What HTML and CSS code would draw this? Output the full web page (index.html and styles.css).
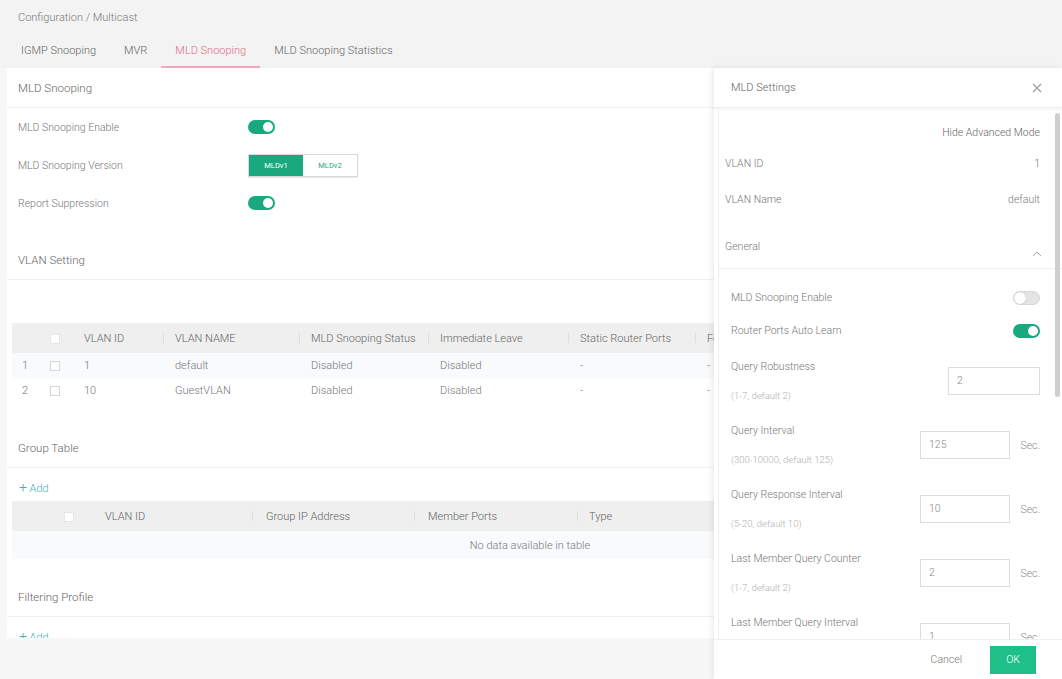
FILE: index.html
```html
<!DOCTYPE html>
<html lang="en">
<head>
    <meta charset="UTF-8">
    <title>Configuration / Multicast - MLD Snooping</title>
    <link rel="stylesheet" href="styles.css">
</head>
<body>
    <div class="top">
        <div class="crumb">Configuration / Multicast</div>
        <div class="tabs">
            <span class="tab">IGMP Snooping</span>
            <span class="tab">MVR</span>
            <span class="tab active">MLD Snooping</span>
            <span class="tab">MLD Snooping Statistics</span>
        </div>
    </div>

    <div class="main">
        <div class="card">
            <div class="sec-title">MLD Snooping</div>
            <div class="form">
                <div class="frow">
                    <span class="flabel">MLD Snooping Enable</span>
                    <span class="switch on"></span>
                </div>
                <div class="frow">
                    <span class="flabel">MLD Snooping Version</span>
                    <span class="seg">
                        <span class="seg-btn sel">MLDv1</span><span class="seg-btn">MLDv2</span>
                    </span>
                </div>
                <div class="frow">
                    <span class="flabel">Report Suppression</span>
                    <span class="switch on"></span>
                </div>
            </div>

            <div class="sec-title gap">VLAN Setting</div>
            <div class="tbl-area vlan-area">
                <table class="grid vlan">
                    <thead>
                        <tr>
                            <th class="c-idx"></th>
                            <th class="c-chk"><span class="chk fill"></span></th>
                            <th class="c-id">VLAN ID</th>
                            <th class="c-name sep">VLAN NAME</th>
                            <th class="c-st sep">MLD Snooping Status</th>
                            <th class="c-il sep">Immediate Leave</th>
                            <th class="c-srp sep">Static Router Ports</th>
                            <th class="sep">Forbidden Router Ports</th>
                        </tr>
                    </thead>
                    <tbody>
                        <tr class="hl">
                            <td class="c-idx">1</td>
                            <td class="c-chk"><span class="chk"></span></td>
                            <td>1</td>
                            <td>default</td>
                            <td>Disabled</td>
                            <td>Disabled</td>
                            <td>-</td>
                            <td>-</td>
                        </tr>
                        <tr>
                            <td class="c-idx">2</td>
                            <td class="c-chk"><span class="chk"></span></td>
                            <td>10</td>
                            <td>GuestVLAN</td>
                            <td>Disabled</td>
                            <td>Disabled</td>
                            <td>-</td>
                            <td>-</td>
                        </tr>
                    </tbody>
                </table>
            </div>

            <div class="sec-title">Group Table</div>
            <div class="tbl-area group-area">
                <div class="add"><span class="plus">+</span> Add</div>
                <table class="grid group">
                    <thead>
                        <tr>
                            <th class="g-chk"><span class="chk fill"></span></th>
                            <th class="g-id">VLAN ID</th>
                            <th class="g-ip sep">Group IP Address</th>
                            <th class="g-mp sep">Member Ports</th>
                            <th class="sep">Type</th>
                        </tr>
                    </thead>
                    <tbody>
                        <tr class="hl">
                            <td colspan="5" class="empty">No data available in table</td>
                        </tr>
                    </tbody>
                </table>
            </div>

            <div class="sec-title">Filtering Profile</div>
            <div class="tbl-area">
                <div class="add"><span class="plus">+</span> Add</div>
            </div>
        </div>

        <div class="drawer">
            <div class="d-head">
                <span>MLD Settings</span>
                <svg class="close" width="10" height="10" viewBox="0 0 10 10"><path d="M1 1L9 9M9 1L1 9" stroke="#999" stroke-width="1.1"/></svg>
            </div>
            <div class="d-body">
                <div class="d-scroll">
                    <div class="adv">Hide Advanced Mode</div>
                    <div class="kv info first"><span>VLAN ID</span><span>1</span></div>
                    <div class="kv info"><span>VLAN Name</span><span>default</span></div>
                    <div class="group-head">
                        <span>General</span>
                        <svg width="10" height="6" viewBox="0 0 10 6"><path d="M1 5L5 1L9 5" fill="none" stroke="#aaa" stroke-width="1"/></svg>
                    </div>
                    <div class="kv sw-row"><span>MLD Snooping Enable</span><span class="switch off"></span></div>
                    <div class="kv sw-row"><span>Router Ports Auto Learn</span><span class="switch on"></span></div>

                    <div class="field">
                        <div class="f-text">
                            <div>Query Robustness</div>
                            <div class="hint">(1-7, default 2)</div>
                        </div>
                        <div class="inp wide">2</div>
                    </div>
                    <div class="field">
                        <div class="f-text">
                            <div>Query Interval</div>
                            <div class="hint">(300-10000, default 125)</div>
                        </div>
                        <div class="inp">125</div>
                        <span class="unit">Sec.</span>
                    </div>
                    <div class="field">
                        <div class="f-text">
                            <div>Query Response Interval</div>
                            <div class="hint">(5-20, default 10)</div>
                        </div>
                        <div class="inp">10</div>
                        <span class="unit">Sec.</span>
                    </div>
                    <div class="field">
                        <div class="f-text">
                            <div>Last Member Query Counter</div>
                            <div class="hint">(1-7, default 2)</div>
                        </div>
                        <div class="inp">2</div>
                        <span class="unit">Sec.</span>
                    </div>
                    <div class="field">
                        <div class="f-text">
                            <div>Last Member Query Interval</div>
                            <div class="hint">(1-25, default 1)</div>
                        </div>
                        <div class="inp">1</div>
                        <span class="unit">Sec.</span>
                    </div>
                </div>
                <div class="scrollbar"></div>
            </div>
            <div class="d-foot">
                <span class="cancel">Cancel</span>
                <span class="ok">OK</span>
            </div>
        </div>
    </div>
</body>
</html>
```

FILE: styles.css
```css
body {
    margin: 0;
    background: #f7f7f7;
    font-family: Roboto, "Liberation Sans", Arial, sans-serif;
    font-weight: 300;
    font-size: 11px;
    color: #6f6f6f;
    overflow: hidden;
}

/* header with breadcrumb and tabs */
.top {
    height: 68px;
    background: #f3f3f3;
}
.crumb {
    padding: 11px 0 0 18px;
    line-height: 14px;
    color: #777;
}
.tabs {
    margin-top: 11px;
    padding-left: 7px;
    display: flex;
}
.tab {
    padding: 0 14px;
    line-height: 30px;
    border-bottom: 2px solid transparent;
    color: #666;
}
.tab.active {
    color: #e06a86;
    border-bottom-color: #eba9b9;
}

.main {
    position: relative;
    height: 611px;
}

/* left card, clipped where the drawer covers it */
.card {
    margin-left: 7px;
    width: 707px;
    height: 570px;
    overflow: hidden;
    background: #fff;
}
.sec-title {
    height: 39px;
    line-height: 40px;
    padding-left: 11px;
    font-size: 11.5px;
    color: #666;
    border-bottom: 1px solid #f0f0f0;
}
.sec-title.gap {
    margin-top: 18px;
}
.form {
    padding-left: 11px;
}
.frow {
    height: 38px;
    display: flex;
    align-items: center;
    font-size: 10.5px;
}
.flabel {
    width: 230px;
    color: #777;
}

.switch {
    position: relative;
    display: inline-block;
    width: 27px;
    height: 14px;
    border-radius: 7px;
    background: #1aa97f;
}
.switch::after {
    content: "";
    position: absolute;
    top: 2px;
    right: 2px;
    width: 10px;
    height: 10px;
    border-radius: 50%;
    background: #fff;
}
.switch.off {
    background: #e4e4e4;
    border: 1px solid #d8d8d8;
    width: 25px;
    height: 12px;
}
.switch.off::after {
    top: 0;
    left: 0;
    right: auto;
    width: 12px;
    height: 12px;
    box-shadow: 0 0 1px #999;
}

.seg {
    display: inline-flex;
    border: 1px solid #d9d9d9;
    height: 21px;
    box-shadow: 0 1px 1px rgba(0, 0, 0, 0.08);
}
.seg-btn {
    width: 54px;
    line-height: 21px;
    text-align: center;
    font-size: 7.5px;
    font-weight: 400;
    color: #1aa97f;
    background: #fff;
}
.seg-btn.sel {
    background: #1aa97f;
    color: #fff;
}

/* tables */
.tbl-area {
    padding-left: 5px;
}
.vlan-area {
    padding-top: 43px;
    padding-bottom: 25px;
}
.group-area {
    padding-bottom: 18px;
}
.grid {
    border-collapse: collapse;
    width: 1036px;
    table-layout: fixed;
}
.grid th {
    background: #efefef;
    height: 30px;
    font-weight: 300;
    text-align: left;
    color: #666;
    padding: 0 0 0 12px;
    position: relative;
    white-space: nowrap;
    overflow: hidden;
}
.grid td {
    height: 25px;
    padding: 0 0 0 12px;
    color: #777;
    white-space: nowrap;
}
.grid .sep::before {
    content: "";
    position: absolute;
    left: 0;
    top: 10px;
    width: 1px;
    height: 10px;
    background: #dcdcdc;
}
.grid tr.hl td {
    background: #f8fafc;
}
.vlan .c-idx { width: 20px; padding-left: 10px; }
.vlan .c-chk { width: 22px; padding-left: 8px; }
.vlan .c-id { width: 79px; }
.vlan .c-name { width: 124px; }
.vlan .c-st { width: 117px; }
.vlan .c-il { width: 128px; }
.vlan .c-srp { width: 115px; }

.group .g-chk { width: 26px; padding-left: 52px; }
.group .g-id { width: 147px; padding-left: 15px; }
.group .g-ip { width: 148px; padding-left: 14px; }
.group .g-mp { width: 149px; padding-left: 14px; }
.group td.empty {
    height: 28px;
    text-align: center;
    padding: 0;
}

.chk {
    display: inline-block;
    width: 8px;
    height: 8px;
    border: 1px solid #d6d6d6;
    background: #fff;
    vertical-align: middle;
}
.chk.fill {
    border-color: #e6e6e6;
}

.add {
    height: 33px;
    line-height: 38px;
    padding-left: 7px;
    color: #3ab0bd;
    font-size: 11px;
}
.add .plus {
    font-size: 14px;
}

/* right drawer */
.drawer {
    position: absolute;
    top: 0;
    right: 0;
    bottom: 0;
    width: 348px;
    background: #fff;
    box-shadow: -2px 0 6px rgba(0, 0, 0, 0.08);
    display: flex;
    flex-direction: column;
}
.d-head {
    height: 39px;
    line-height: 41px;
    padding: 0 20px 0 17px;
    display: flex;
    align-items: center;
    justify-content: space-between;
    border-bottom: 1px solid #eee;
    box-shadow: 0 2px 3px rgba(0, 0, 0, 0.05);
    color: #666;
}
.d-body {
    flex: 1;
    position: relative;
    overflow: hidden;
    margin-left: 4px;
    border-left: 1px solid #eee;
    margin-top: 3px;
    font-size: 10.5px;
}
.d-scroll {
    padding-right: 22px;
}
.scrollbar {
    position: absolute;
    right: 2px;
    top: 2px;
    width: 5px;
    height: 284px;
    border-radius: 3px;
    background: #cfcfcf;
}
.adv {
    text-align: right;
    line-height: 16px;
    padding-top: 14px;
    color: #666;
}
.kv {
    display: flex;
    justify-content: space-between;
    align-items: center;
    height: 36px;
    padding-left: 12px;
    color: #777;
}
.kv.info {
    padding-left: 6px;
}
.kv.first {
    margin-top: 4px;
}
.group-head {
    margin-top: 7px;
    height: 44px;
    padding-left: 6px;
    margin-right: -22px;
    padding-right: 20px;
    border-bottom: 1px solid #eee;
    display: flex;
    justify-content: space-between;
    align-items: center;
    color: #777;
}
.group-head svg {
    margin-top: 16px;
}
.sw-row {
    height: 33px;
}
.group-head + .sw-row {
    margin-top: 12px;
}
.field {
    display: flex;
    align-items: center;
    height: 64px;
    padding-left: 12px;
    color: #777;
}
.sw-row + .sw-row + .field {
    margin-top: 2px;
}
.f-text {
    flex: 1;
    line-height: 29px;
}
.hint {
    font-size: 9.5px;
    color: #b0b0b0;
}
.inp {
    width: 80px;
    height: 26px;
    line-height: 26px;
    border: 1px solid #ddd;
    padding-left: 8px;
    color: #888;
}
.inp.wide {
    width: 82px;
}
.unit {
    width: 30px;
    text-align: right;
    color: #888;
}
.d-foot {
    height: 39px;
    border-top: 1px solid #eee;
    display: flex;
    align-items: center;
    justify-content: flex-end;
    padding-right: 26px;
    font-size: 10.5px;
    background: #fff;
    position: relative;
}
.cancel {
    margin-right: 28px;
    color: #777;
}
.ok {
    width: 46px;
    height: 28px;
    line-height: 28px;
    text-align: center;
    background: #1fbf8a;
    color: #fff;
}
```
